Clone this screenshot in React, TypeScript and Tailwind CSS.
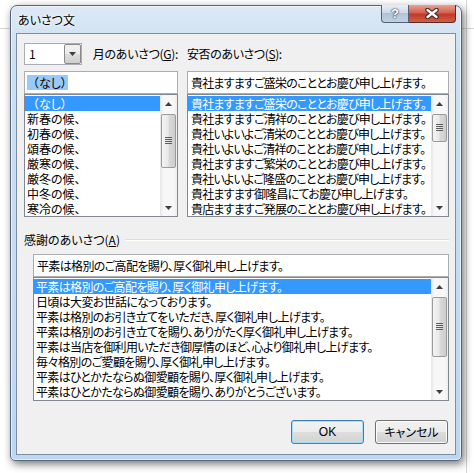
import React from 'react';

const jp = "font-['Noto_Sans_CJK_JP','Noto_Sans',sans-serif] [font-feature-settings:'palt'] text-[12px]";

const seasonItems = ['（なし）', '新春の候、', '初春の候、', '頌春の候、', '厳寒の候、', '厳冬の候、', '中冬の候、', '寒冷の候、'];

const anpiItems = [
    '貴社ますますご盛栄のこととお慶び申し上げます。',
    '貴社ますますご清祥のこととお慶び申し上げます。',
    '貴社いよいよご清栄のこととお慶び申し上げます。',
    '貴社いよいよご清祥のこととお慶び申し上げます。',
    '貴社ますますご繁栄のこととお慶び申し上げます。',
    '貴社いよいよご隆盛のこととお慶び申し上げます。',
    '貴社ますます御隆昌にてお慶び申し上げます。',
    '貴店ますますご発展のこととお慶び申し上げます。'
];

const thanksItems = [
    '平素は格別のご高配を賜り、厚く御礼申し上げます。',
    '日頃は大変お世話になっております。',
    '平素は格別のお引き立てをいただき、厚く御礼申し上げます。',
    '平素は格別のお引き立てを賜り、ありがたく厚く御礼申し上げます。',
    '平素は当店を御利用いただき御厚情のほど、心より御礼申し上げます。',
    '毎々格別のご愛顧を賜り、厚く御礼申し上げます。',
    '平素はひとかたならぬ御愛顧を賜り、厚く御礼申し上げます。',
    '平素はひとかたならぬ御愛顧を賜り、ありがとうございます。'
];

function Arrow({ down }: { down?: boolean }) {
    return (
        <svg width="7" height="4" viewBox="0 0 7 4">
            <path d={down ? 'M0 0 L7 0 L3.5 4 Z' : 'M0 4 L3.5 0 L7 4 Z'} fill="#3f3f3f" />
        </svg>
    );
}

// full-width opening paren keeps its left space, the rest stays proportional
function Label({ text }: { text: string }) {
    if (text.startsWith('（')) {
        return (
            <>
                <span className="[font-feature-settings:normal]">（</span>
                {text.slice(1)}
            </>
        );
    }
    return <>{text}</>;
}

function ScrollBar({ thumb }: { thumb: string }) {
    return (
        <div className="w-[17px] shrink-0 flex flex-col bg-[linear-gradient(90deg,#e6e6e6,#f7f7f7_20%,#f7f7f7_80%,#ededed)]">
            <div className="h-[17px] flex items-center justify-center">
                <Arrow />
            </div>
            <div className="flex-1 flex flex-col">
                <div className={`${thumb} mt-[2px] mx-px rounded-[2px] border border-[#9b9b9b] bg-[linear-gradient(90deg,#f4f4f4,#e9e9e9_45%,#d9d9d9_55%,#cdcdcd)] flex items-center justify-center`}>
                    <svg width="7" height="8" viewBox="0 0 7 8">
                        <path d="M0 0.5 H7 M0 2.5 H7 M0 4.5 H7 M0 6.5 H7" stroke="#5e5e5e" strokeWidth="1" />
                    </svg>
                </div>
            </div>
            <div className="h-[17px] flex items-center justify-center">
                <Arrow down />
            </div>
        </div>
    );
}

function ListBox({ items, thumb, height, pad }: { items: string[]; thumb: string; height: string; pad: string }) {
    return (
        <div className={`${height} flex border border-[#828790] bg-white`}>
            <div className="flex-1 min-w-0 pt-px overflow-hidden">
                {items.map((item, i) => (
                    <div
                        key={i}
                        className={`h-[15px] leading-[15px] whitespace-nowrap ${pad} ${i === 0 ? 'bg-[#3399ff] text-white' : 'text-black'}`}
                    >
                        <Label text={item} />
                    </div>
                ))}
            </div>
            <ScrollBar thumb={thumb} />
        </div>
    );
}

function TextBox({ children }: { children: React.ReactNode }) {
    return (
        <div className="h-[23px] border border-[#abadb3] bg-white flex items-center pl-[3px] whitespace-nowrap overflow-hidden text-black">
            {children}
        </div>
    );
}

export default function App() {
    return (
        <div className={`relative w-[474px] h-[473px] overflow-hidden bg-white ${jp}`}>
            {/* excel sheet behind */}
            <div className="absolute left-0 top-[28px] w-[474px] h-px bg-[#d4d4d4]" />
            <div className="absolute left-[466px] top-0 w-px h-[473px] bg-[#d4d4d4]" />

            {/* dialog window */}
            <div className="absolute left-[10px] top-[5px] w-[452px] h-[456px] flex flex-col px-[5px] pb-[5px] border border-[#56677b] rounded-t-[7px] rounded-b-[5px] bg-[linear-gradient(180deg,#dde9f5,#cde0f2_10%,#bdd7f1)] shadow-[inset_0_0_0_1px_rgba(255,255,255,0.55),2px_3px_8px_rgba(0,0,0,0.55)]">
                {/* title bar */}
                <div className="h-[27px] flex justify-between">
                    <div className="self-center pl-[2px] text-black [text-shadow:0_0_6px_#fff,0_0_3px_#fff]">あいさつ文</div>
                    <div className="flex -mt-px h-[18px]">
                        <div className="w-[28px] h-full rounded-bl-[4px] border border-[#4f6277] border-t-0 bg-[linear-gradient(180deg,#e8eef5,#cbd7e4_50%,#b3c3d6_50%,#c3d2e2)] flex items-center justify-center text-white font-bold text-[13px] leading-none font-['Liberation_Sans',sans-serif] [text-shadow:0_0_2px_#1d2a3a,0_0_1px_#1d2a3a]">
                            ?
                        </div>
                        <div className="w-[47px] h-full rounded-br-[4px] border border-[#5a2a24] border-t-0 border-l-0 bg-[linear-gradient(180deg,#eba293,#d5604e_45%,#c03a28_55%,#cf5f49)] flex items-center justify-center">
                            <svg width="14" height="11" viewBox="0 0 14 11">
                                <path d="M2.5 2 L11.5 9 M11.5 2 L2.5 9" stroke="#3d2420" strokeWidth="4.5" strokeLinecap="round" />
                                <path d="M2.5 2 L11.5 9 M11.5 2 L2.5 9" stroke="#ffffff" strokeWidth="2.4" strokeLinecap="round" />
                            </svg>
                        </div>
                    </div>
                </div>

                {/* client area */}
                <div className="flex-1 flex flex-col border border-[#7f8fa3] bg-[#f0f0f0] pl-[7px] pr-[6px] pt-[9px]">
                    <div className="grid grid-cols-[154px_262px] gap-x-[9px]">
                        <div className="h-[22px] flex items-center">
                            <div className="w-[60px] h-[22px] flex border border-[#abadb3] bg-white">
                                <div className="flex-1 pl-[4px] leading-[20px] text-black">1</div>
                                <div className="w-[17px] h-full rounded-[2px] border border-[#8a8a8a] bg-[linear-gradient(180deg,#f2f2f2,#ebebeb_50%,#dddddd_50%,#cfcfcf)] flex items-center justify-center">
                                    <Arrow down />
                                </div>
                            </div>
                            <div className="ml-[11px] text-black whitespace-nowrap tracking-[-0.3px]">
                                月のあいさつ(<span className="underline">G</span>):
                            </div>
                        </div>
                        <div className="h-[22px] flex items-center text-black whitespace-nowrap tracking-[-0.4px]">
                            安否のあいさつ(<span className="underline">S</span>):
                        </div>

                        <div className="mt-[6px]">
                            <div className="h-[23px] border border-[#abadb3] bg-white flex items-center pl-[2px]">
                                <span className="h-[15px] leading-[15px] pr-[1px] bg-[#99c8fb] text-black">
                                    <Label text="（なし）" />
                                </span>
                            </div>
                            <ListBox items={seasonItems} thumb="h-[54px]" height="h-[123px]" pad="pl-[2px]" />
                        </div>
                        <div className="mt-[6px] tracking-[-0.8px]">
                            <TextBox>貴社ますますご盛栄のこととお慶び申し上げます。</TextBox>
                            <ListBox items={anpiItems} thumb="h-[28px]" height="h-[123px]" pad="pl-[3px]" />
                        </div>
                    </div>

                    {/* thanks group */}
                    <div className="mt-[15px] h-[16px] flex items-center text-black">
                        <span className="whitespace-nowrap">
                            感謝のあいさつ(<span className="underline">A</span>)
                        </span>
                        <div className="flex-1 ml-[5px] h-[2px] border-t border-[#d5dfe5] border-b border-b-white" />
                    </div>
                    <div className="ml-[9px] mt-[6px] tracking-[-0.65px]">
                        <TextBox>平素は格別のご高配を賜り、厚く御礼申し上げます。</TextBox>
                        <ListBox items={thanksItems} thumb="h-[60px]" height="h-[124px]" pad="pl-[2px]" />
                    </div>

                    {/* buttons */}
                    <div className="mt-[19px] flex justify-end gap-[11px] pr-px">
                        <div className="w-[73px] h-[24px] rounded-[3px] border border-[#3c7fb1] shadow-[inset_0_0_0_1px_#a9dcf6] bg-[linear-gradient(180deg,#f3f3f3,#ececec_50%,#dedede_50%,#d2d2d2)] flex items-center justify-center text-black font-['Liberation_Sans','Noto_Sans_CJK_JP',sans-serif]">
                            OK
                        </div>
                        <div className="w-[73px] h-[24px] rounded-[3px] border border-[#707070] shadow-[inset_0_0_0_1px_#fcfcfc] bg-[linear-gradient(180deg,#f2f2f2,#ebebeb_50%,#dddddd_50%,#cfcfcf)] flex items-center justify-center text-black">
                            キャンセル
                        </div>
                    </div>
                </div>
            </div>
        </div>
    );
}
